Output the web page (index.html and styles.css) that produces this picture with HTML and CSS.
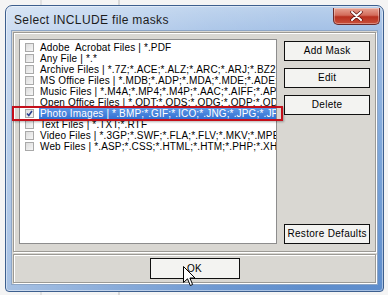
FILE: index.html
```html
<!DOCTYPE html>
<html lang="en">
<head>
    <meta charset="UTF-8">
    <title>Select INCLUDE file masks</title>
    <link rel="stylesheet" href="styles.css">
</head>
<body>
    <div class="desktop">
        <div class="window">
            <div class="titlebar">
                <span class="title">Select INCLUDE file masks</span>
                <div class="close-btn">
                    <svg width="13" height="10" viewBox="0 0 13 10">
                        <path d="M2 1 L11 9 M11 1 L2 9" stroke="#5a1010" stroke-width="3.4" stroke-linecap="round"/>
                        <path d="M2 1 L11 9 M11 1 L2 9" stroke="#fff" stroke-width="2" stroke-linecap="round"/>
                    </svg>
                </div>
            </div>
            <div class="client">
                <div class="panel top-panel">
                    <div class="mask-list">
                        <div class="row"><span class="chk"></span><span class="label">Adobe&nbsp; Acrobat Files | *.PDF</span></div>
                        <div class="row"><span class="chk"></span><span class="label">Any File | *.*</span></div>
                        <div class="row"><span class="chk"></span><span class="label">Archive Files | *.7Z;*.ACE;*.ALZ;*.ARC;*.ARJ;*.BZ2;*.CAB;*.GZ;*.RAR</span></div>
                        <div class="row"><span class="chk"></span><span class="label">MS Office Files | *.MDB;*.ADP;*.MDA;*.MDE;*.ADE;*.DOC;*.XLS</span></div>
                        <div class="row"><span class="chk"></span><span class="label">Music Files | *.M4A;*.MP4;*.M4P;*.AAC;*.AIFF;*.APE;*.MP3</span></div>
                        <div class="row"><span class="chk"></span><span class="label">Open Office Files | *.ODT;*.ODS;*.ODG;*.ODP;*.ODB;*.ODF</span></div>
                        <div class="row selected"><span class="chk checked"><svg width="7" height="7" viewBox="0 0 7 7"><path d="M1 3.5 L2.8 5.5 L6 1" stroke="#2a3f8f" stroke-width="1.6" fill="none"/></svg></span><span class="label">Photo Images | *.BMP;*.GIF;*.ICO;*.JNG;*.JPG;*.JPEG;*.PNG</span></div>
                        <div class="row"><span class="chk"></span><span class="label">Text Files | *.TXT;*.RTF</span></div>
                        <div class="row"><span class="chk"></span><span class="label">Video Files | *.3GP;*.SWF;*.FLA;*.FLV;*.MKV;*.MPEG;*.MPG</span></div>
                        <div class="row"><span class="chk"></span><span class="label">Web Files | *.ASP;*.CSS;*.HTML;*.HTM;*.PHP;*.XHTML;*.JS</span></div>
                    </div>
                    <div class="side-buttons">
                        <button class="btn">Add Mask</button>
                        <button class="btn">Edit</button>
                        <button class="btn">Delete</button>
                        <button class="btn restore-btn">Restore Defaults</button>
                    </div>
                    <!-- red highlight frame drawn over the selected row -->
                    <div class="mark"></div>
                </div>
                <div class="panel bottom-panel">
                    <div class="ok-wrap">
                        <button class="btn ok-btn">OK</button>
                        <svg class="cursor" width="13" height="21" viewBox="0 0 13 21">
                            <path d="M0.5 0.5 L0.5 16.5 L4.5 12.8 L7.3 19.5 L9.6 18.5 L6.9 12 L12 12 Z" fill="#fff" stroke="#000" stroke-width="1" stroke-linejoin="miter"/>
                        </svg>
                    </div>
                </div>
            </div>
        </div>
    </div>
</body>
</html>
```

FILE: styles.css
```css
body {
    margin: 0;
    background-color: #eeeeee;
    font-family: "Liberation Sans", Arial, sans-serif;
}
.desktop {
    width: 388px;
    height: 295px;
    padding: 5px 4px 0 5px;
    box-sizing: border-box;
    background: linear-gradient(to right, #f4f4f4 0, #f4f4f4 40px, #cfcfcf 41px, #f4f4f4 42px, #f4f4f4 118px, #bdbdbd 119px, #f4f4f4 120px);
}
.window {
    width: 379px;
    height: 287px;
    box-sizing: border-box;
    display: flex;
    flex-direction: column;
    padding: 0 5px 6px 5px;
    border: 1px solid #3d5f8e;
    border-radius: 7px 7px 4px 4px;
    background: linear-gradient(to right, rgba(255, 255, 255, 0.45), rgba(255, 255, 255, 0.1) 55%, rgba(255, 255, 255, 0) 80%),
                linear-gradient(to bottom, #b9d0ec 0, #a3c0e6 26px, #7ea7da 50%, #5e8dcc 100%);
    box-shadow: inset 0 0 0 1px rgba(255, 255, 255, 0.45);
}
.titlebar {
    height: 25px;
    display: flex;
    justify-content: space-between;
    align-items: flex-start;
}
.title {
    margin-top: 7px;
    margin-left: 3px;
    font-size: 12px;
    letter-spacing: 0.35px;
    color: #1c1c1c;
}
.close-btn {
    width: 47px;
    height: 17px;
    margin-top: 2px;
    margin-right: -2px;
    display: flex;
    justify-content: center;
    align-items: center;
    border: 1px solid #6b2a2a;
    border-top: none;
    border-radius: 0 0 5px 5px;
    box-sizing: border-box;
    background: linear-gradient(to bottom, #e8a393 0, #d36c5b 45%, #b8301f 55%, #c9503b 100%);
    box-shadow: inset 0 0 0 1px rgba(255, 255, 255, 0.35);
}
.client {
    flex: 1;
    display: flex;
    flex-direction: column;
    background-color: #d9d7d2;
    border: 1px solid #8ea6c6;
    padding: 1px 1px 1px 1px;
}
.panel {
    border: 1px solid #9c9a95;
    box-shadow: inset 1px 1px 0 #ffffff, 1px 1px 0 #ffffff;
}
.top-panel {
    position: relative;
    height: 220px;
    box-sizing: border-box;
    display: flex;
    gap: 7px;
    padding: 6px 5px 7px 5px;
}
.mask-list {
    width: 259px;
    box-sizing: border-box;
    background-color: #ffffff;
    border: 1px solid #8d8d8d;
    padding-top: 2px;
    overflow: hidden;
}
.row {
    height: 11px;
    display: flex;
    align-items: center;
    padding-left: 5px;
    white-space: nowrap;
    font-size: 10px;
    letter-spacing: 0.15px;
    color: #000000;
}
.chk {
    width: 9px;
    height: 9px;
    flex: none;
    box-sizing: border-box;
    border: 1px solid #a9a9a9;
    background: linear-gradient(135deg, #dcdcdc, #f6f6f6);
    margin-right: 5px;
    display: flex;
    align-items: center;
    justify-content: center;
}
.label {
    flex: 1;
    height: 11px;
    line-height: 11px;
    padding-left: 1px;
    overflow: hidden;
}
.selected .label {
    background: linear-gradient(to bottom, #5d98e6, #3270d2);
    color: #ffffff;
}
.side-buttons {
    width: 86px;
    display: flex;
    flex-direction: column;
    gap: 7px;
    padding-top: 2px;
}
.btn {
    height: 20px;
    padding: 0;
    border: 1px solid #101010;
    background-color: #f3f3f1;
    font-family: "Liberation Sans", Arial, sans-serif;
    font-size: 10px;
    line-height: 12px;
    letter-spacing: 0.3px;
    color: #000000;
}
.restore-btn {
    margin-top: auto;
}
.mark {
    position: absolute;
    left: -2px;
    top: 73px;
    width: 267px;
    height: 11px;
    border: 2px solid #c40f1a;
    box-shadow: 1px 1px 2px rgba(0, 0, 0, 0.3);
}
.bottom-panel {
    margin-top: 2px;
    height: 29px;
    box-sizing: border-box;
    display: flex;
    justify-content: center;
    align-items: center;
}
.ok-wrap {
    position: relative;
}
.ok-btn {
    width: 90px;
    height: 21px;
    display: block;
}
.cursor {
    position: absolute;
    left: 33px;
    top: 8px;
}
```
